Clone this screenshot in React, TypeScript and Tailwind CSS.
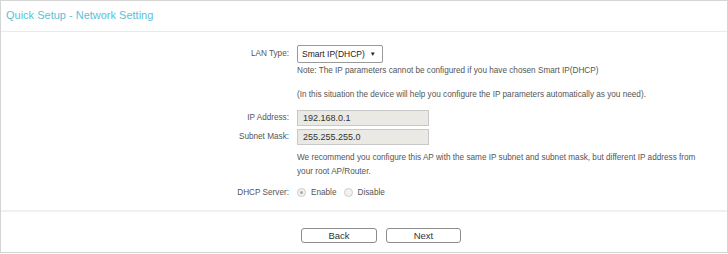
import React from "react";

const font = { fontFamily: '"Liberation Sans", Arial, sans-serif' };

function Row({ label, children, className = "" }: { label?: string; children: React.ReactNode; className?: string }) {
	return (
		<div className={`flex items-center ${className}`}>
			<div className="w-[296px] shrink-0 pr-[8px] text-right">{label}</div>
			<div className="flex-1">{children}</div>
		</div>
	);
}

export default function App() {
	return (
		<div className="h-[254px] w-[728px] bg-white" style={font}>
			<div className="h-[253px] border border-[#d4d4d4] flex flex-col">
				{/* Header */}
				<div className="h-[31px] border-b border-[#ebebeb] pl-[5px] pt-[6px] text-[11px] text-[#5bbfd6]">
					Quick Setup - Network Setting
				</div>

				{/* Form */}
				<div className="flex-1 text-[8.2px] text-[#555] leading-none pt-[13px]">
					<Row label="LAN Type:">
						<div className="inline-flex h-[18px] items-center border border-[#9a9a9a] rounded-[2px] bg-white pl-[4px] pr-[6px] text-[8.5px] text-[#222]">
							Smart IP(DHCP)
							<span className="ml-[5px] text-[6px]">▼</span>
						</div>
					</Row>
					<Row className="mt-[4px]">
						<span>Note: The IP parameters cannot be configured if you have chosen Smart IP(DHCP)</span>
					</Row>
					<Row className="mt-[16px]">
						<span>(In this situation the device will help you configure the IP parameters automatically as you need).</span>
					</Row>
					<Row label="IP Address:" className="mt-[11px]">
						<div className="h-[16px] w-[132px] border border-[#c8c8c8] bg-[#ebe9e4] px-[5px] flex items-center text-[9px] text-[#333]">
							192.168.0.1
						</div>
					</Row>
					<Row label="Subnet Mask:" className="mt-[3px]">
						<div className="h-[16px] w-[132px] border border-[#c8c8c8] bg-[#ebe9e4] px-[5px] flex items-center text-[9px] text-[#333]">
							255.255.255.0
						</div>
					</Row>
					<Row className="mt-[6px]">
						<div className="leading-[14px]">
							We recommend you configure this AP with the same IP subnet and subnet mask, but different IP address from
							<br />
							your root AP/Router.
						</div>
					</Row>
					<Row label="DHCP Server:" className="mt-[9px]">
						<div className="flex items-center">
							<span className="h-[9px] w-[9px] rounded-full border border-[#ccc] bg-[#f2f2f2] flex items-center justify-center">
								<span className="h-[3px] w-[3px] rounded-full bg-[#aaa]" />
							</span>
							<span className="ml-[5px]">Enable</span>
							<span className="ml-[7px] h-[9px] w-[9px] rounded-full border border-[#ccc] bg-[#f2f2f2]" />
							<span className="ml-[5px]">Disable</span>
						</div>
					</Row>
				</div>

				{/* Footer */}
				<div className="h-[42px] border-t-[2px] border-[#f0f0f0] flex items-start justify-center gap-[9px] pt-[16px] pl-[34px]">
					<button className="h-[15px] w-[76px] border border-[#8c8c8c] rounded-[3px] bg-white text-[9.5px] text-[#333] leading-none">
						Back
					</button>
					<button className="h-[15px] w-[75px] border border-[#8c8c8c] rounded-[3px] bg-white text-[9.5px] text-[#333] leading-none">
						Next
					</button>
				</div>
			</div>
		</div>
	);
}
